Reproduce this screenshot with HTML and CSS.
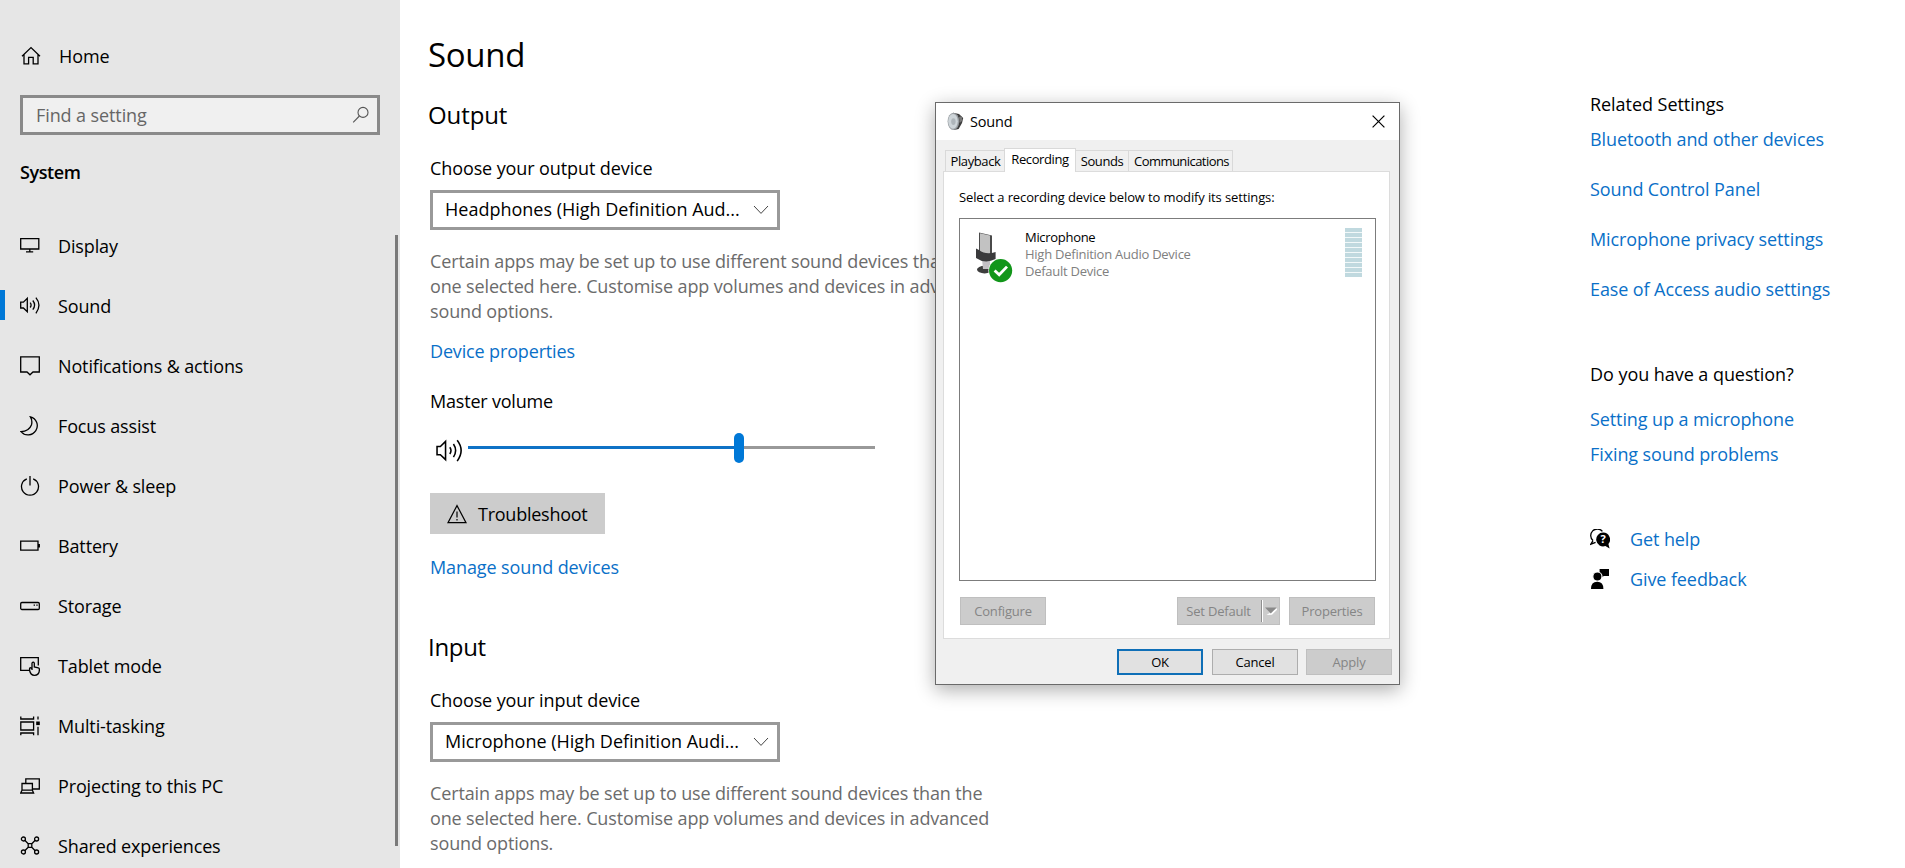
FILE: index.html
```html
<!DOCTYPE html>
<html lang="en">
<head>
  <meta charset="UTF-8">
  <meta name="viewport" content="width=device-width, initial-scale=1.0">
  <title>Settings - Sound</title>
  <link rel="stylesheet" href="styles.css">
</head>
<body>
  <div class="settings">
    <aside class="sidebar">
      <a class="home">
        <svg class="icon" viewBox="0 0 20 20"><path d="M2 10.2 L11 1.6 L20 10.2 M4 8.8 V17.8 H8.6 V11.4 H13.2 V17.8 H18 V8.8"/></svg>
        <span>Home</span>
      </a>
      <div class="search">
        <span>Find a setting</span>
        <svg class="search-icon" viewBox="0 0 18 18"><circle cx="11" cy="6.4" r="5"/><path d="M7.4 10 L1.2 16.4"/></svg>
      </div>
      <h2 class="group">System</h2>
      <nav class="nav">
        <a class="nav-item">
          <svg class="icon" viewBox="0 0 20 20"><path d="M.7 2.7 H18.8 V13 H.7 Z M9.8 13 V15.5 M6 15.8 H13.2"/></svg>
          <span>Display</span>
        </a>
        <a class="nav-item active">
          <svg class="icon" viewBox="0 0 20 20"><path d="M.7 6.2 H3.4 L7.3 2.4 V15.8 L3.4 12 H.7 Z M10.2 6.7 Q12 9.1 10.2 11.5 M12.8 4.5 Q16.4 9.1 12.8 13.7 M15.9 1.6 Q22 9.1 15.9 17.4"/></svg>
          <span>Sound</span>
        </a>
        <a class="nav-item">
          <svg class="icon" viewBox="0 0 20 20"><path d="M.7 .8 H19.3 V16 H13 L10 18.8 L7 16 H.7 Z"/></svg>
          <span>Notifications &amp; actions</span>
        </a>
        <a class="nav-item">
          <svg class="icon" viewBox="0 0 20 20"><path d="M10.4 .8 A9.2 9.2 0 1 1 1 15.6 Q9 15.4 11.4 9 Q12.7 4.6 10.4 .8 Z"/></svg>
          <span>Focus assist</span>
        </a>
        <a class="nav-item">
          <svg class="icon" viewBox="0 0 20 20"><path d="M6.8 2.8 A8.5 8.5 0 1 0 13.2 2.8 M10 0 V9.5"/></svg>
          <span>Power &amp; sleep</span>
        </a>
        <a class="nav-item">
          <svg class="icon" viewBox="0 0 20 20"><path d="M.7 5.2 H18 V14.2 H.7 Z M19.3 8 V11.4"/></svg>
          <span>Battery</span>
        </a>
        <a class="nav-item">
          <svg class="icon" viewBox="0 0 20 20"><rect x=".7" y="6.5" width="18.6" height="7" rx="1.2"/><path d="M13.6 9.2 H15 M16.3 9.2 H17.7"/></svg>
          <span>Storage</span>
        </a>
        <a class="nav-item">
          <svg class="icon" viewBox="0 0 20 20"><path d="M9 14.4 H.7 V1.7 H18.3 V9.6"/><path d="M12 14 V7 Q13.2 5.2 14.3 7 V11 L18.3 11.8 Q19.4 12 19.4 13.5 Q19.4 19.3 14.4 19.3 Q10.6 19.3 9.6 14.5 L9.6 12.3 Q10.8 11 12 12.8"/></svg>
          <span>Tablet mode</span>
        </a>
        <a class="nav-item">
          <svg class="icon" viewBox="0 0 20 20"><path d="M.8 .6 V3 H13.6 V.6 M.8 6 H13.6 V14 H.8 Z M.8 19.2 V17 H13.6 V19.2 M18 .6 V3.6 M18 10.8 V19.2"/><rect class="solid" x="16.2" y="5.5" width="3.6" height="3.6"/></svg>
          <span>Multi-tasking</span>
        </a>
        <a class="nav-item">
          <svg class="icon" viewBox="0 0 20 20"><path d="M5.8 7 V2.8 H19.3 V13 H12.5 M2 7.5 H12.4 V14.2 H2 Z M2 14.2 L.7 17 H13.6 L12.4 14.2"/></svg>
          <span>Projecting to this PC</span>
        </a>
        <a class="nav-item">
          <svg class="icon" viewBox="0 0 20 20"><path d="M4.8 4.3 L8.2 7.7 M15.2 4.3 L11.8 7.7 M4.8 14.7 L8.2 11.3 M15.2 14.7 L11.8 11.3 M8.2 7.7 H11.8 V11.3 H8.2 Z"/><circle cx="3.4" cy="3" r="2"/><circle cx="16.6" cy="3" r="2"/><circle cx="3.4" cy="16" r="2"/><circle cx="16.6" cy="16" r="2"/></svg>
          <span>Shared experiences</span>
        </a>
      </nav>
      <div class="scrollbar"></div>
    </aside>

    <main class="content">
      <h1>Sound</h1>

      <h2>Output</h2>
      <label>Choose your output device</label>
      <div class="dropdown">
        <span>Headphones (High Definition Aud...</span>
        <svg class="chevron" viewBox="0 0 16 10"><path d="M1 1 L8 8.4 L15 1"/></svg>
      </div>
      <p class="hint">Certain apps may be set up to use different sound devices than the one selected here. Customise app volumes and devices in advanced sound options.</p>
      <a class="link device-link">Device properties</a>

      <label class="volume-label">Master volume</label>
      <div class="volume">
        <svg class="speaker" viewBox="0 0 26 22"><path d="M1 7.2 H4.2 L9.2 2.2 V19.8 L4.2 15 H1 Z M13.3 7.8 Q15.6 11 13.3 14.4 M16.8 4.8 Q21 11 16.8 17.4 M20.4 1.2 Q28 11 20.4 21.2"/></svg>
        <div class="slider">
          <div class="slider-fill"></div>
          <div class="slider-thumb"></div>
          <div class="slider-rest"></div>
        </div>
      </div>
      <button class="troubleshoot">
        <svg class="warning" viewBox="0 0 20 20"><path d="M10 1.6 L19 18.6 H1 Z M10 7.5 V13.5 M10 15 V16.6"/></svg>
        <span>Troubleshoot</span>
      </button>
      <a class="link manage-link">Manage sound devices</a>

      <h2 class="input-title">Input</h2>
      <label>Choose your input device</label>
      <div class="dropdown">
        <span>Microphone (High Definition Audi...</span>
        <svg class="chevron" viewBox="0 0 16 10"><path d="M1 1 L8 8.4 L15 1"/></svg>
      </div>
      <p class="hint">Certain apps may be set up to use different sound devices than the one selected here. Customise app volumes and devices in advanced sound options.</p>
    </main>

    <aside class="related">
      <h3>Related Settings</h3>
      <div class="related-links">
        <a class="link">Bluetooth and other devices</a>
        <a class="link">Sound Control Panel</a>
        <a class="link">Microphone privacy settings</a>
        <a class="link">Ease of Access audio settings</a>
      </div>
      <h3 class="question">Do you have a question?</h3>
      <div class="question-links">
        <a class="link">Setting up a microphone</a>
        <a class="link">Fixing sound problems</a>
      </div>
      <div class="help-links">
        <div class="help-row">
          <svg class="help-icon" viewBox="0 0 20 20"><path class="line" d="M3 11.6 L.8 15.2 L5.6 13.4 M3 11.6 A6.6 6.6 0 1 1 12.4 2.4"/><path d="M13.2 3.6 A6.9 6.9 0 1 0 15.4 17 L19.6 19.6 L18.4 15 A6.9 6.9 0 0 0 13.2 3.6 Z"/><text x="10.6" y="14.4">?</text></svg>
          <a class="link">Get help</a>
        </div>
        <div class="help-row">
          <svg class="help-icon" viewBox="0 0 20 20"><path d="M9.6 0 H19 V7 H13.8 L11 9 V7 H9.6 Z"/><circle class="head" cx="7.4" cy="7.6" r="4.6"/><path d="M1 20 Q1 12.8 7.2 12.8 Q13.4 12.8 13.4 20 Z"/></svg>
          <a class="link">Give feedback</a>
        </div>
      </div>
    </aside>
  </div>

  <div class="dialog">
    <div class="titlebar">
      <svg class="title-icon" viewBox="0 0 17 19"><path d="M6 .8 L12 2 L16.2 6 L15 11 L11.6 17 L7 18 Z" fill="#3c3c3c"/><path d="M12 5 L15 4 V9 L12.6 11 Z" fill="#777"/><ellipse cx="6.4" cy="9.3" rx="5.8" ry="8.6" fill="#9a9fa3"/><ellipse cx="6" cy="9.3" rx="4.8" ry="7.4" fill="#ced5d9"/><ellipse cx="6.4" cy="9.6" rx="2.2" ry="3.4" fill="#aeb5ba"/></svg>
      <span>Sound</span>
      <svg class="close" viewBox="0 0 13 13"><path d="M.6 .6 L12.4 12.4 M12.4 .6 L.6 12.4"/></svg>
    </div>
    <div class="tabs">
      <div class="tab playback">Playback</div>
      <div class="tab recording">Recording</div>
      <div class="tab sounds">Sounds</div>
      <div class="tab communications">Communications</div>
    </div>
    <div class="panel">
      <div class="panel-text">Select a recording device below to modify its settings:</div>
      <div class="device-list">
        <svg class="mic" viewBox="0 0 40 54">
          <ellipse cx="9.6" cy="38.6" rx="7.6" ry="3.8" fill="#3d3d3d"/>
          <path d="M7 28 H15 V38 H8 Z" fill="#c3c0c4"/>
          <path d="M4 1.6 L17 4.6 V25 H4 Z" fill="#4a4a4a"/>
          <path d="M5 2.2 L15 4.6 V23.8 L5 21.6 Z" fill="#c2c2c2"/>
          <path d="M1 17.6 L4 19 Q11 24.4 20.6 21 V28 Q10 33.4 1 27 Z" fill="#3a3a3c"/>
          <circle cx="25.6" cy="39.6" r="12.2" fill="#fff"/>
          <circle cx="25.6" cy="39.6" r="11.6" fill="#12961a"/>
          <path d="M19.6 39.4 L24.2 43.8 L32 35.6" fill="none" stroke="#fff" stroke-width="2.8"/>
        </svg>
        <div class="device-info">
          <div class="device-name">Microphone</div>
          <div>High Definition Audio Device</div>
          <div>Default Device</div>
        </div>
        <div class="meter"></div>
      </div>
      <div class="panel-buttons">
        <button class="btn disabled">Configure</button>
        <button class="btn disabled split">
          <span class="split-text">Set Default</span>
          <svg class="arrow" viewBox="0 0 14 8"><path d="M2.5 8 L13 1.2 V2.8 L8 7.8 Z" fill="#fff"/><path d="M1 .6 H12.6 L6.8 6.4 Z" fill="#8a8a8a"/></svg>
        </button>
        <button class="btn disabled">Properties</button>
      </div>
    </div>
    <div class="footer">
      <button class="btn ok">OK</button>
      <button class="btn">Cancel</button>
      <button class="btn disabled">Apply</button>
    </div>
  </div>
</body>
</html>
```
FILE: styles.css
```css
* {
  box-sizing: border-box;
}
body {
  margin: 0;
  height: 868px;
  overflow: hidden;
  background: #fff;
  color: #000;
  font-family: "Open Sans", "Noto Sans", sans-serif;
  font-size: 18px;
  line-height: 24px;
  letter-spacing: -0.1px;
}
h1, h2, h3, p {
  margin: 0;
  font-weight: 400;
}
button {
  font: inherit;
  letter-spacing: inherit;
  padding: 0;
  border: none;
}
svg {
  flex: none;
  fill: none;
  stroke: #000;
  stroke-width: 1.3;
}
.link {
  color: #0a70c8;
}
.settings {
  display: flex;
  height: 868px;
}

/* Sidebar */
.sidebar {
  position: relative;
  width: 400px;
  flex: none;
  padding-top: 36px;
  background: #e6e6e6;
  overflow: hidden;
}
.icon {
  width: 20px;
  height: 20px;
}
.home {
  display: flex;
  align-items: center;
  gap: 19px;
  height: 40px;
  padding-left: 20px;
}
.home .icon {
  overflow: visible;
}
.search {
  display: flex;
  align-items: center;
  justify-content: space-between;
  width: 360px;
  height: 40px;
  margin: 19px 0 0 20px;
  padding: 0 7px 0 13px;
  border: 3px solid #8a8a8a;
  background: #f0f0f0;
  color: #666;
}
.search-icon {
  width: 18px;
  height: 18px;
  stroke: #555;
  stroke-width: 1.1;
}
.group {
  margin: 25px 0 32px 20px;
  font-size: 18px;
  font-weight: 600;
  letter-spacing: -0.4px;
}
.nav-item {
  display: flex;
  align-items: center;
  gap: 18px;
  height: 60px;
  padding-left: 20px;
  letter-spacing: -0.14px;
}
.nav-item.active {
  background: linear-gradient(#0078d7, #0078d7) 0 14px / 5px 30px no-repeat;
}
.solid {
  fill: #000;
  stroke: none;
}
.scrollbar {
  position: absolute;
  left: 395px;
  top: 235px;
  width: 3px;
  height: 611px;
  background: #7a7a7a;
}

/* Main content */
.content {
  display: flex;
  flex-direction: column;
  align-items: flex-start;
  width: 1190px;
  flex: none;
  padding: 35px 0 0 30px;
}
.content h1 {
  margin-left: -2px;
  font-size: 33px;
  font-weight: 370;
  line-height: 40px;
  letter-spacing: -0.3px;
}
.content h2 {
  margin: 25px 0 26px -2px;
  font-size: 24px;
  line-height: 30px;
  letter-spacing: -0.1px;
}
.dropdown {
  display: flex;
  align-items: center;
  justify-content: space-between;
  width: 350px;
  height: 40px;
  margin-top: 10px;
  padding: 0 8px 2px 12px;
  border: 3px solid #999;
  letter-spacing: 0;
}
.chevron {
  width: 16px;
  height: 10px;
  margin-top: 2px;
  stroke: #444;
  stroke-width: 1;
}
.hint {
  width: 570px;
  margin-top: 19px;
  color: #6b6b6b;
  line-height: 25px;
  letter-spacing: -0.14px;
}
.device-link {
  margin-top: 15px;
  letter-spacing: -0.15px;
}
.volume-label {
  margin-top: 26px;
  letter-spacing: -0.2px;
}
.volume {
  display: flex;
  align-items: center;
  gap: 5px;
  height: 30px;
  margin-top: 20px;
  padding-left: 6px;
}
.speaker {
  width: 27px;
  height: 23px;
  margin-top: 5px;
  stroke-width: 1.5;
}
.slider {
  display: flex;
  align-items: center;
  width: 407px;
}
.slider-fill {
  width: 266px;
  height: 3px;
  margin-bottom: 1px;
  background: #0f72c6;
}
.slider-thumb {
  width: 10px;
  height: 30px;
  border-radius: 5px;
  background: #0078d7;
}
.slider-rest {
  flex: 1;
  height: 3px;
  margin-bottom: 1px;
  background: #999;
}
.troubleshoot {
  display: flex;
  align-items: center;
  gap: 11px;
  width: 175px;
  height: 41px;
  margin-top: 30px;
  padding-left: 17px;
  background: #ccc;
  letter-spacing: -0.25px;
}
.warning {
  width: 20px;
  height: 20px;
  stroke-width: 1.2;
}
.manage-link {
  margin-top: 21px;
}
.content .input-title {
  margin: 53px 0 26px -2px;
  letter-spacing: -0.3px;
}

/* Right column */
.related {
  padding-top: 92px;
}
.related h3 {
  font-size: 18px;
  letter-spacing: -0.05px;
}
.related-links {
  display: flex;
  flex-direction: column;
  gap: 26px;
  margin-top: 11px;
}
.related .question {
  margin-top: 61px;
}
.question-links {
  display: flex;
  flex-direction: column;
  gap: 11px;
  margin-top: 21px;
}
.help-links {
  display: flex;
  flex-direction: column;
  gap: 16px;
  margin-top: 61px;
}
.help-row {
  display: flex;
  align-items: center;
  gap: 20px;
}
.help-icon {
  width: 20px;
  height: 20px;
  fill: #000;
  stroke: none;
}
.help-icon .line {
  fill: none;
  stroke: #000;
  stroke-width: 1.3;
}
.help-icon .head {
  stroke: #fff;
  stroke-width: 1.2;
}
.help-icon text {
  fill: #fff;
  font-size: 11px;
  font-weight: 700;
}

/* Sound dialog */
.dialog {
  position: absolute;
  left: 935px;
  top: 102px;
  width: 465px;
  height: 583px;
  border: 1px solid #6a6a6a;
  background: #f0f0f0;
  box-shadow: 0 5px 18px rgba(0, 0, 0, 0.32);
  font-size: 13px;
  line-height: 17px;
  letter-spacing: -0.2px;
}
.titlebar {
  display: flex;
  align-items: center;
  height: 37px;
  padding: 0 14px 0 11px;
  background: #fff;
  font-size: 14.5px;
}
.title-icon {
  width: 17px;
  height: 19px;
  margin-right: 6px;
  stroke: none;
}
.close {
  width: 13px;
  height: 13px;
  margin-left: auto;
  stroke-width: 1.2;
}
.tabs {
  display: flex;
  align-items: flex-end;
  height: 31px;
  padding-left: 9px;
}
.tab {
  position: relative;
  height: 21px;
  padding-top: 2px;
  border: 1px solid #d9d9d9;
  border-bottom: none;
  letter-spacing: -0.4px;
  text-align: center;
}
.playback {
  width: 59px;
  padding-left: 1px;
  border-right: none;
}
.recording {
  z-index: 1;
  width: 72px;
  height: 24px;
  margin-bottom: -1px;
  background: #fff;
}
.sounds {
  width: 53px;
  border-left: none;
}
.communications {
  width: 104px;
  padding-left: 2px;
  border-left: none;
  letter-spacing: -0.55px;
}
.panel {
  width: 447px;
  height: 468px;
  margin-left: 7px;
  padding: 17px 13px 0 15px;
  border: 1px solid #dcdcdc;
  background: #fff;
}
.panel-text {
  letter-spacing: -0.13px;
}
.device-list {
  display: flex;
  width: 417px;
  height: 363px;
  margin-top: 12px;
  padding: 10px 13px 0 15px;
  border: 1px solid #7c7c7c;
}
.mic {
  width: 40px;
  height: 54px;
  margin-top: 2px;
  stroke: none;
}
.device-info {
  margin-left: 10px;
  color: #808080;
  letter-spacing: -0.25px;
}
.device-name {
  color: #000;
  letter-spacing: -0.3px;
}
.meter {
  width: 17px;
  height: 49px;
  margin-top: -1px;
  margin-left: auto;
  background: repeating-linear-gradient(#c0d9df 0 4px, #f2f8f9 4px 5px);
}
.panel-buttons {
  display: flex;
  gap: 9px;
  width: 416px;
  margin-top: 16px;
  padding-left: 1px;
}
.panel-buttons .btn {
  height: 28px;
}
.btn {
  width: 86px;
  height: 26px;
  border: 1px solid #adadad;
  background: #e1e1e1;
  color: #000;
  text-align: center;
}
.btn.disabled {
  border-color: #bfbfbf;
  background: #ccc;
  color: #858585;
}
.btn.split {
  display: flex;
  align-items: center;
  width: 103px;
  margin-left: auto;
}
.split-text {
  width: 84px;
  padding-right: 2px;
  line-height: 22px;
  border-right: 1px solid #8f8f8f;
  box-shadow: 1px 0 0 #fff;
}
.arrow {
  width: 14px;
  height: 8px;
  margin-left: 2px;
  stroke: none;
}
.footer {
  display: flex;
  justify-content: flex-end;
  gap: 8px;
  margin-top: 10px;
  padding-right: 7px;
}
.btn.ok {
  margin-right: 1px;
  border: 2px solid #0f6fb7;
}
```
